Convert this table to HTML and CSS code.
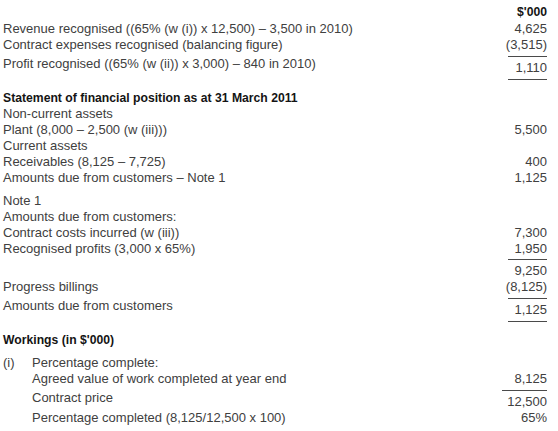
FILE: index.html
```html
<!DOCTYPE html>
<html lang="en">
<head>
<meta charset="utf-8">
<title>Construction contract</title>
<link rel="stylesheet" href="styles.css">
</head>
<body>
<div class="sheet">
  <div class="row head"><span class="label"></span><span class="amt bold">$'000</span></div>
  <div class="row top1"><span class="label">Revenue recognised ((65% (w (i)) x 12,500) – 3,500 in 2010)</span><span class="amt">4,625</span></div>
  <div class="row"><span class="label">Contract expenses recognised (balancing figure)</span><span class="amt">(3,515)</span></div>
  <div class="row sum total"><span class="label">Profit recognised ((65% (w (ii)) x 3,000) – 840 in 2010)</span><span class="amt">1,110</span></div>

  <div class="row section"><span class="label bold">Statement of financial position as at 31 March 2011</span><span class="amt"></span></div>
  <div class="row"><span class="label">Non-current assets</span><span class="amt"></span></div>
  <div class="row"><span class="label">Plant (8,000 – 2,500 (w (iii)))</span><span class="amt">5,500</span></div>
  <div class="row"><span class="label">Current assets</span><span class="amt"></span></div>
  <div class="row"><span class="label">Receivables (8,125 – 7,725)</span><span class="amt">400</span></div>
  <div class="row"><span class="label">Amounts due from customers – Note 1</span><span class="amt">1,125</span></div>

  <div class="row group"><span class="label">Note 1</span><span class="amt"></span></div>
  <div class="row"><span class="label">Amounts due from customers:</span><span class="amt"></span></div>
  <div class="row"><span class="label">Contract costs incurred (w (iii))</span><span class="amt">7,300</span></div>
  <div class="row"><span class="label">Recognised profits (3,000 x 65%)</span><span class="amt">1,950</span></div>
  <div class="row sum sum-tight"><span class="label"></span><span class="amt">9,250</span></div>
  <div class="row"><span class="label">Progress billings</span><span class="amt">(8,125)</span></div>
  <div class="row sum total"><span class="label">Amounts due from customers</span><span class="amt">1,125</span></div>

  <div class="row section"><span class="label bold">Workings (in $'000)</span><span class="amt"></span></div>
  <div class="work group">
    <span class="num">(i)</span>
    <div class="work-body">
      <div class="row"><span class="label">Percentage complete:</span><span class="amt"></span></div>
      <div class="row"><span class="label">Agreed value of work completed at year end</span><span class="amt">8,125</span></div>
      <div class="row sum wide"><span class="label">Contract price</span><span class="amt">12,500</span></div>
      <div class="row"><span class="label">Percentage completed (8,125/12,500 x 100)</span><span class="amt">65%</span></div>
    </div>
  </div>
</div>
</body>
</html>
```

FILE: styles.css
```css
html, body {
  margin: 0;
  padding: 0;
  background: #ffffff;
}

body {
  font-family: "Liberation Sans", Arial, sans-serif;
  font-size: 13px;
  line-height: 16px;
  color: #404040;
}

.sheet {
  padding: 4px 11px 0 3px;
}

.row {
  display: grid;
  grid-template-columns: 1fr 46px;
  white-space: nowrap;
}

.amt {
  justify-self: end;
  text-align: right;
  min-width: 39px;
}

.bold {
  font-size: 12.2px;
  font-weight: bold;
  color: #141414;
}

.top1 {
  margin-top: 1px;
}

.sum {
  margin-top: 3px;
}

.sum-tight {
  margin-top: 2px;
}

.sum .amt {
  border-top: 1px solid #4a4a4a;
  padding-top: 3px;
}

.total .amt {
  border-bottom: 1px solid #4a4a4a;
  padding-bottom: 3px;
}

.wide .amt {
  min-width: 45px;
}

.section {
  margin-top: 10px;
}

.group {
  margin-top: 7px;
}

.work {
  display: grid;
  grid-template-columns: 29px 1fr;
}

.num {
  line-height: 16px;
}
```
